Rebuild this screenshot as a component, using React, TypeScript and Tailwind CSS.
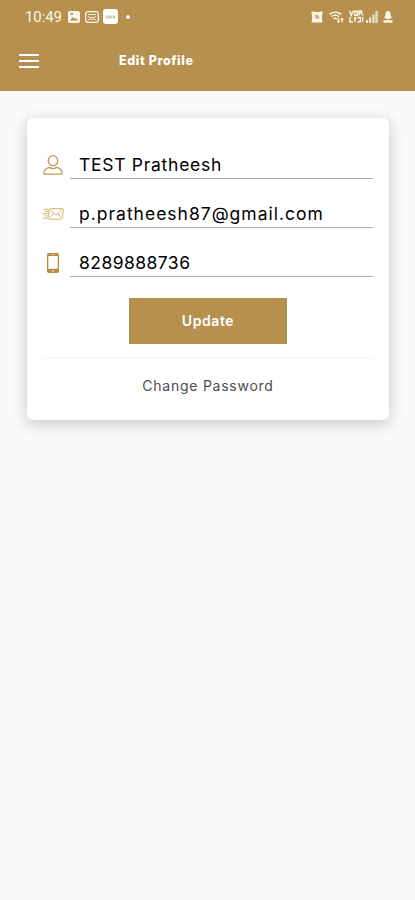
import React from 'react';

interface FieldProps {
  icon: React.ReactNode;
  value: string;
  textClass: string;
}

const StatusBar: React.FC = () => (
  <div className="flex h-[33px] items-center pl-[25px] pr-[22px] text-[#fdf6e8]">
    <span className="w-[43px] font-['Roboto'] text-[15px] leading-4 tracking-[-0.1px]">10:49</span>

    {/* Notifications */}
    <svg className="h-3 w-3" viewBox="0 0 12 12" fill="none">
      <rect width="12" height="12" rx="2" fill="currentColor" />
      <path d="M2 9.5 4.6 6l1.6 2 1.2-1.2L10 9.5z" fill="#b5904e" />
      <path d="M2.2 2.2h3v1.6h-3z" fill="#b5904e" />
    </svg>
    <svg className="ml-[5px] h-3 w-[14px]" viewBox="0 0 14 12" fill="none" stroke="currentColor">
      <rect x="0.7" y="0.7" width="12.6" height="10.6" rx="1.8" strokeWidth="1.3" />
      <path d="M2.8 3.5h8.4M3 5.500l2 1h4l2-1M2.800 9 5 7.800l2 1 2-1L11.200 9" strokeWidth="0.900" />
    </svg>
    <span className="ml-1 flex h-[15px] w-[15px] items-center justify-center rounded-[3px] bg-white">
      <svg className="h-1 w-[11px]" viewBox="0 0 11 4" fill="none" stroke="#b9a789">
        <path d="M0.5 1.2h10M0.5 2.8h10" strokeDasharray="2 0.5" />
      </svg>
    </span>
    <span className="ml-2 h-1 w-1 rounded-full bg-current" />

    {/* System icons */}
    <div className="ml-auto flex items-center">
      <svg className="h-3 w-3" viewBox="0 0 12 12" fill="none">
        <path d="M0.5 0.5h2.3l1 .6h4.4l1-.6h2.3v2.6l-.6 1v4l.6 3.4H.5l.6-3.4v-4l-.6-1z" fill="currentColor" />
        <circle cx="6" cy="6" r="2.7" fill="#e8d9bb" />
        <path d="M5 4.200 6 6.2l1.800.8" stroke="#9c7a3f" />
      </svg>
      <svg className="ml-1.5 h-3 w-[15px]" viewBox="0 0 15 12" fill="none" stroke="currentColor" strokeWidth="1.5">
        <path d="M0.6 3.4C4 .4 8.500 .4 12 3.400M2.600 5.600c2.400-2 5-2 7.400 0M4.600 7.800c1.200-.8 2.200-.8 3.400 0" />
        <path d="M9.500 7v4M8.200 9.800l1.300 1.400 1.300-1.400M13 11.500v-4M11.700 8.700 13 7.300l1.300 1.400" strokeWidth="1.200" />
      </svg>
      <svg className="ml-[5px] h-[13px] w-[15px]" viewBox="0 0 15 13" fill="none" stroke="currentColor" strokeWidth="1.4">
        <path d="M0.500 .8l1.800 4.700L4.200 .8M5.600 1.300h2.600v3.900H5.600zM10 5.500V1h2.500v2H10M12.500 3l1.500 2.500" />
        <path d="M1 7v5h3M6 7v5M4.800 8.200H7.500M8.500 7.500h2.800v4.300H8.500M13.600 7v5" />
      </svg>
      <svg className="ml-[2px] h-3 w-3" viewBox="0 0 12 12" fill="currentColor">
        <rect x="0" y="9" width="2" height="3" opacity="0.9" />
        <rect x="3.200" y="6.500" width="2" height="5.500" opacity="0.9" />
        <rect x="6.400" y="3.500" width="2.200" height="8.500" opacity="0.8" />
        <rect x="9.300" y="0" width="2.500" height="12" opacity="0.700" />
      </svg>
      <svg className="ml-[5px] h-3 w-[10px]" viewBox="0 0 10 12" fill="currentColor">
        <path d="M3.500 0h3v1.200h1V4.500L9 6.500 5 8.500 1 6.500 2.500 4.500V1.200h1z" />
        <path d="M0.500 9.200h9v2.500h-9z" />
      </svg>
    </div>
  </div>
);

const Header: React.FC = () => (
  <header className="h-[91px] bg-[#b5904e]">
    <StatusBar />
    <div className="flex h-14 items-center pl-[19px] text-white">
      <button aria-label="Menu" className="flex w-[100px] flex-col gap-[4px]">
        <span className="h-[2px] w-5 bg-white" />
        <span className="h-[2px] w-5 bg-white" />
        <span className="h-[2px] w-5 bg-white" />
      </button>
      <h1 className="text-[12.500px] font-extrabold leading-4 tracking-[0.6px]">Edit Profile</h1>
    </div>
  </header>
);

const UserIcon: React.FC = () => (
  <svg className="h-5 w-5" viewBox="0 0 20 20" fill="none" stroke="#c69a4b" strokeWidth="1.300">
    <ellipse cx="10" cy="5.700" rx="4.700" ry="5" />
    <path d="M6.200 12.400C3 13.200 1 15 .8 18.200c0 .6.300.9.900.9h16.600c.6 0 .9-.3.900-.9-.2-3.200-2.200-5-5.400-5.800-2.300 1.400-5.300 1.400-7.600 0z" />
  </svg>
);

const MailIcon: React.FC = () => (
  <svg className="h-3 w-[22px] shrink-0" viewBox="0 0 22 12" fill="none" stroke="#cda963" strokeWidth="0.900">
    <path d="M8.600 .6h11.600c.8 0 1.300.5 1.200 1.300l-1 7.800c-.1.900-.8 1.500-1.600 1.500H7.300c-.8 0-1.300-.6-1.200-1.400l.9-7.700c.1-.9.800-1.500 1.600-1.500z" />
    <path d="M8.200 1.800l5 4.500c.5.500 1.100.5 1.700 0l5-4.500M7.400 10l4.200-4.400M19.200 10l-3.200-4.400" />
    <path d="M1.500 1.400H6M3 3.600h3.200M0 5.800h5.500M2.500 7.900h3M1 10.200h4.500" />
  </svg>
);

const PhoneIcon: React.FC = () => (
  <svg className="h-5 w-3" viewBox="0 0 12 20" fill="none">
    <rect width="12" height="20" rx="1.800" fill="#b98c39" />
    <rect x="1.300" y="3" width="9.400" height="12.800" fill="#fff" />
    <path d="M4.300 1.500h3.400" stroke="#eedcb5" strokeWidth="0.800" />
    <circle cx="6" cy="17.900" r="1" fill="#eedcb5" />
  </svg>
);

const Field: React.FC<FieldProps> = ({ icon, value, textClass }) => (
  <div className="flex h-[49px] items-end">
    <div className="mr-[7px] flex h-[26px] w-5 shrink-0 items-start justify-center">
      <div className="flex h-6 items-center">{icon}</div>
    </div>
    <div className="flex-1 border-b border-[#aaaaaa] pb-px pl-[9px] text-black">
      <span className={`block whitespace-nowrap leading-6 ${textClass}`}>{value}</span>
    </div>
  </div>
);

export default function App() {
  return (
    <div className="min-h-screen bg-[#fafafa] font-['Inter',sans-serif]">
      <Header />

      <main className="pl-[27px] pr-[26px] pt-[27px]">
        <div className="h-[302px] rounded-[6px] bg-white px-4 pt-3 shadow-[0_4px_14px_2px_rgba(0,0,0,0.16)]">
          <Field icon={<UserIcon />} value="TEST Pratheesh" textClass="text-[17.500px] tracking-[0.720px]" />
          <Field icon={<MailIcon />} value="p.pratheesh87@gmail.com" textClass="text-[17.500px] tracking-[1px]" />
          <Field icon={<PhoneIcon />} value="8289888736" textClass="text-[17.500px] tracking-[0.450px]" />

          <div className="mt-[21px] flex justify-center">
            <button className="h-[46px] w-[158px] bg-[#b5904e] pb-px text-[14px] font-semibold tracking-[0.6px] text-white">
              Update
            </button>
          </div>

          {/* Divider */}
          <div className="mt-[13px] h-[2px] bg-[#f8f8f8]" />

          <div className="mt-[17px] text-center text-[14px] leading-5 tracking-[0.750px] text-[#4d4d4d]">
            Change Password
          </div>
        </div>
      </main>
    </div>
  );
}
